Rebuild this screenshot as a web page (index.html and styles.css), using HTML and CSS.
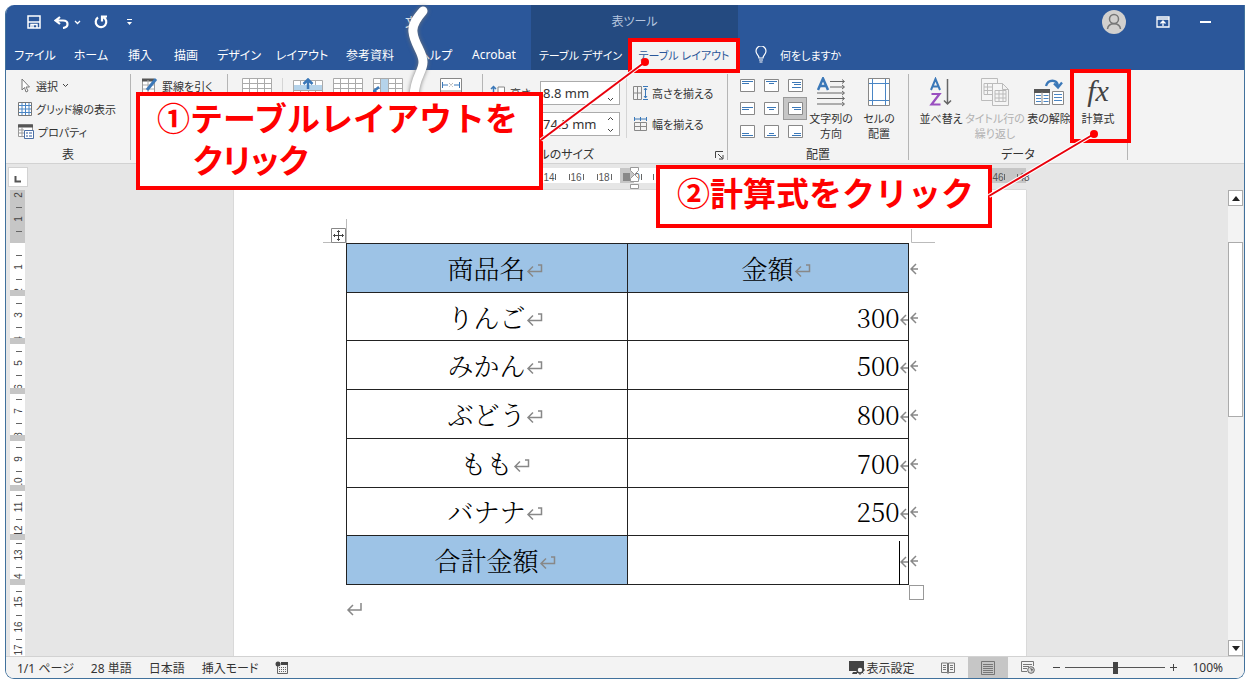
FILE: index.html
```html
<!DOCTYPE html>
<html lang="ja">
<head>
  <meta charset="UTF-8">
  <title>表ツール - 計算式</title>
  <link rel="stylesheet" href="styles.css">
</head>
<body>
  <svg class="defs" aria-hidden="true">
    <symbol id="ret" viewBox="0 0 17 14"><path d="M12 1h3.500v6.500H2M7 2.500L2 7.500l5 5"/></symbol>
    <symbol id="ret2" viewBox="0 0 17 14"><path d="M15 1v7H2M7 3L2 8l5 5"/></symbol>
    <symbol id="mark" viewBox="0 0 8 12"><path d="M8 6H1M6 1L1 6l5 5"/></symbol>
    <symbol id="grid" viewBox="0 0 30 21"><path class="w" d="M.5.500h29v20H.500z"/><path class="g" d="M.5.500h29v20H.500zM.5 5.500h29M.5 10.500h29M.5 15.500h29M7.500.500v20M15.500.500v20M22.500.500v20"/></symbol>
  </svg>

  <div class="window">
    <header class="titlebar">
      <div class="title-left">
        <div class="quick">
          <button aria-label="保存"><svg width="14" height="14" viewBox="0 0 14 14"><path d="M1 1h12v12H1zM1 7h12M4 13V9.500h6V13M6 10v3" fill="none" stroke="#fff" stroke-width="1.500"/></svg></button>
          <button aria-label="元に戻す"><svg width="15" height="13" viewBox="0 0 15 13"><path d="M6 1L1.500 4.500 6 8M2 4.500h7c6 0 6 7 0 7.500" fill="none" stroke="#fff" stroke-width="2.200"/></svg></button>
          <button class="small" aria-label="元に戻す一覧"><svg width="7" height="5"><path d="M1 1l2.500 2.500L6 1" fill="none" stroke="#fff" stroke-width="1.300"/></svg></button>
          <button aria-label="やり直し"><svg width="14" height="14" viewBox="0 0 14 14"><path d="M4 2.500a5.300 5.300 0 1 0 5.500-.3M8 6.500V1.500h5" fill="none" stroke="#fff" stroke-width="2.200"/></svg></button>
          <button class="custom" aria-label="カスタマイズ"><svg width="5" height="6"><path d="M0 .500h5" stroke="#fff"/><path d="M0 3h5L2.500 6z" fill="#fff"/></svg></button>
          <span class="docname">文</span>
        </div>
        <nav class="tabs">
          <button>ファイル</button>
          <button>ホーム</button>
          <button>挿入</button>
          <button>描画</button>
          <button>デザイン</button>
          <button>レイアウト</button>
          <button>参考資料</button>
          <button>ヘルプ</button>
          <button>Acrobat</button>
        </nav>
      </div>
      <div class="context">
        <div class="context-title">表ツール</div>
        <nav class="context-tabs">
          <button>テーブル デザイン</button>
          <button class="active">テーブル レイアウト</button>
        </nav>
      </div>
      <div class="title-right">
        <div class="account">
          <svg width="24" height="24" viewBox="0 0 24 24"><circle cx="12" cy="12" r="12" fill="#d2d0ce"/><g fill="none" stroke="#777" stroke-width="1.500"><circle cx="12" cy="9" r="4.500"/><path d="M5.500 19c1-7 12-7 13 0"/></g></svg>
          <button aria-label="リボンの表示オプション"><svg width="14" height="12" viewBox="0 0 14 12"><path d="M1 1h12v10H1zM1 3h12M7 10V5M4.500 7.500L7 5l2.500 2.500" fill="none" stroke="#fff" stroke-width="1.300"/></svg></button>
          <button aria-label="最小化"><svg width="11" height="2"><path d="M0 1h11" stroke="#fff" stroke-width="2"/></svg></button>
        </div>
        <button class="tellme"><svg width="12" height="17" viewBox="0 0 12 17"><path d="M4 12c0-3-3-3.500-3-7a5 5 0 0 1 10 0c0 3.500-3 4-3 7zM4 14h4M4.500 16h3" fill="none" stroke="#fff" stroke-width="1.200"/></svg>何をしますか</button>
      </div>
    </header>

    <div class="ribbon">
      <section class="group g-table">
        <div class="body col">
          <button><svg width="14" height="15" viewBox="0 0 14 15"><path d="M4 1v11l2.500-2.500L8 14l2-1-2-4h3.500z" fill="#fff" stroke="#777"/></svg>選択<svg width="7" height="5"><path d="M1 1l2.500 2.500L6 1" fill="none" stroke="#444"/></svg></button>
          <button><svg width="14" height="14" viewBox="0 0 14 14"><path d="M.5.500h13v13H.500z" fill="#fff" stroke="#777"/><path d="M1 3.500h12M1 7h12M1 10.500h12M4 1v12M7.500 1v12M11 1v12" stroke="#4a86c5"/></svg>グリッド線の表示</button>
          <button><svg width="16" height="15" viewBox="0 0 16 15"><path d="M.5.500h14v12H.500z" fill="#fff" stroke="#999"/><path d="M0 2h15" stroke="#555" stroke-width="3"/><path d="M0 6h6M0 9h6M4 3v10" stroke="#999"/><path d="M6.500 6.500h9v8h-9z" fill="#fff" stroke="#4a6fa5"/><path d="M8 9h2M11 9h3M8 12h2M11 12h3" stroke="#2b579a"/></svg>プロパティ</button>
        </div>
        <div class="label">表</div>
      </section>
      <section class="group g-draw">
        <div class="body col">
          <button><svg width="16" height="15" viewBox="0 0 16 15"><path d="M.5 1.500h12v13H.500z" fill="#fff" stroke="#999"/><path d="M0 2h12" stroke="#555" stroke-width="3"/><path d="M1 7h11M1 11h11M6 2v12" stroke="#aaa"/><path d="M5 12L14 1" stroke="#3b78b8" stroke-width="3"/></svg>罫線を引く</button>
        </div>
      </section>
      <section class="group g-rows">
        <div class="body">
          <button aria-label="削除"><svg width="30" height="21"><use href="#grid"/></svg></button>
          <i class="line"></i>
          <button aria-label="上に行を挿入"><svg width="30" height="23" viewBox="0 -2 30 23"><use href="#grid" width="30" height="21"/><path d="M1 5h28v5H1z" fill="#b5d3ea"/><path d="M15 9V0M10.500 4L15-.500 19.500 4" fill="none" stroke="#3b78b8" stroke-width="2.500"/></svg></button>
          <button aria-label="下に行を挿入"><svg width="30" height="21"><use href="#grid"/></svg></button>
          <button aria-label="左に列を挿入"><svg width="30" height="21"><use href="#grid"/><path d="M8 1h7v19H8z" fill="#b5d3ea"/><path d="M6 9L1 13l5 4" fill="none" stroke="#3b78b8" stroke-width="2.500"/></svg></button>
          <button class="fit" aria-label="自動調整"><svg width="22" height="24" viewBox="0 0 22 24"><path d="M.5.500h21v23H.500z" fill="#fff" stroke="#888"/><path d="M1 13h20" stroke="#999"/><path d="M2.500 4v6M19.500 4v6M3 7h5M19 7h-5" stroke="#3b78b8"/><path d="M9 5l4 4M13 5L9 9" stroke="#999" stroke-dasharray="1 1"/></svg></button>
        </div>
      </section>
      <section class="group g-size">
        <div class="body">
          <div class="fields">
            <label for="h"><svg width="16" height="16" viewBox="0 0 16 16"><path d="M3.500 2v13M1 4l2.500-2.500L6 4" fill="none" stroke="#3b78b8" stroke-width="1.500"/><path d="M8 2h6.500v13H8z" fill="#fff" stroke="#888"/></svg>高さ:</label>
            <div class="spin"><input id="h" value="8.8 mm"><svg width="7" height="15" viewBox="0 0 7 15"><path d="M1 12l2.500 2.500L6 12" fill="none" stroke="#444"/></svg></div>
            <div class="spin second"><input aria-label="幅" value="74.5 mm"><svg width="7" height="15" viewBox="0 0 7 15"><path d="M1 3L3.500.500 6 3M1 12l2.500 2.500L6 12" fill="none" stroke="#444"/></svg></div>
          </div>
          <div class="even">
            <button><svg width="15" height="14" viewBox="0 0 15 14"><path d="M.5.500h8v13h-8zM.5 7h8M4.500 1v12" fill="none" stroke="#888"/><path d="M10 .500h5M10 13.500h5M12.500 2v10M11 4l1.500-2L14 4M11 10l1.500 2 1.500-2" fill="none" stroke="#3b78b8"/></svg>高さを揃える</button>
            <button><svg width="15" height="14" viewBox="0 0 15 14"><path d="M1.500 5.500h12v8h-12zM1.500 9.500h12M7.500 5v8" fill="none" stroke="#888"/><path d="M1.500 0v4M7.500 0v4M13.500 0v4M2 2h11" fill="none" stroke="#3b78b8"/></svg>幅を揃える</button>
          </div>
        </div>
        <div class="label size-label">セルのサイズ<button class="launch" aria-label="表のプロパティ"><svg width="9" height="9" viewBox="0 0 9 9"><path d="M.5 7V.500H8M3 3l4.500 4.500M8 4v4H4" fill="none" stroke="#444"/></svg></button></div>
      </section>
      <section class="group g-align">
        <div class="body">
          <div class="aligns">
            <button aria-label="上揃え(左)"><svg width="15" height="13"><path class="b" d="M.5.500h14v12H.500z"/><path class="l" d="M2 2.500h11M2 4.500h7"/></svg></button>
            <button aria-label="上揃え(中央)"><svg width="15" height="13"><path class="b" d="M.5.500h14v12H.500z"/><path class="l" d="M2 2.500h11M5 4.500h5"/></svg></button>
            <button aria-label="上揃え(右)"><svg width="15" height="13"><path class="b" d="M.5.500h14v12H.500z"/><path class="l" d="M4 3.500h9M6 5.500h7M4 8.500h9"/></svg></button>
            <button aria-label="両端揃え(中央)"><svg width="15" height="13"><path class="b" d="M.5.500h14v12H.500z"/><path class="l" d="M2 5.500h11M2 7.500h7"/></svg></button>
            <button aria-label="中央揃え"><svg width="15" height="13"><path class="b" d="M.5.500h14v12H.500z"/><path class="l" d="M3 5.500h9M5 7.500h5"/></svg></button>
            <button class="on" aria-label="中央揃え(右)"><svg width="15" height="13"><path class="b" d="M.5.500h14v12H.500z"/><path class="l" d="M4 5.500h9M6 7.500h7"/></svg></button>
            <button aria-label="下揃え(左)"><svg width="15" height="13"><path class="b" d="M.5.500h14v12H.500z"/><path class="l" d="M2 8.500h7M2 10.500h11"/></svg></button>
            <button aria-label="下揃え(中央)"><svg width="15" height="13"><path class="b" d="M.5.500h14v12H.500z"/><path class="l" d="M5 8.500h5M3 10.500h9"/></svg></button>
            <button aria-label="下揃え(右)"><svg width="15" height="13"><path class="b" d="M.5.500h14v12H.500z"/><path class="l" d="M6 8.500h7M4 10.500h9"/></svg></button>
          </div>
          <button class="big"><svg width="30" height="30" viewBox="0 0 30 30"><path d="M2 13L7 1.500 12 13M4 9h6" fill="none" stroke="#3b78b8" stroke-width="2.500"/><path d="M14 4.500h14M14 10h14M1 16h27M1 21.500h27M1 27h27M26 2.500l2.500 2-2.500 2M26 8l2.500 2-2.500 2M26 14l2.500 2-2.500 2M26 19.500l2.500 2-2.500 2M26 25l2.500 2-2.500 2" fill="none" stroke="#666"/></svg>文字列の<br>方向</button>
          <button class="big"><svg width="22" height="30" viewBox="0 0 22 30"><path d="M.5 1.500h21v27H.500z" fill="#fff" stroke="#888"/><path d="M4.500 2v26M17.500 2v26M1 6.500h20M1 23.500h20" stroke="#4a86c5"/></svg>セルの<br>配置</button>
        </div>
        <div class="label">配置</div>
      </section>
      <section class="group g-data">
        <div class="body">
          <button class="big"><svg width="24" height="30" viewBox="0 0 24 30"><path d="M2 13L6.500 2 11 13M3.500 9.500h6" fill="none" stroke="#3b78b8" stroke-width="2"/><path d="M2.500 17h8L2.500 27.500h9" fill="none" stroke="#9a4fc0" stroke-width="2.200"/><path d="M18.500 2v25M15 23.500l3.500 3.500 3.500-3.500" fill="none" stroke="#666" stroke-width="1.500"/></svg>並べ替え</button>
          <button class="big wide" disabled><svg width="30" height="30" viewBox="0 0 30 30"><path d="M1.500 1.500h16v22h-16z" fill="#f5f5f5" stroke="#bbb"/><path d="M4 6.500h10v11H4zM4 10h10M4 13.500h10M7.500 6v11" fill="none" stroke="#bbb"/><path d="M12.500 6.500h10l6 6v16h-16zM22.500 6.500v6h6" fill="#f5f5f5" stroke="#bbb"/><path d="M15 13.500h11v11H15zM15 17h11M15 21h11M19 13v11M23 13v11" fill="none" stroke="#bbb"/></svg>タイトル行の<br>繰り返し</button>
          <button class="big"><svg width="30" height="30" viewBox="0 0 30 30"><path d="M12 9c2-7 11-7 12 0M20 6.500l4 4 4-5" fill="none" stroke="#3b78b8" stroke-width="2.300"/><path d="M.5 12.500h15v15H.500zM18.500 14.500h11v13h-11z" fill="#fff" stroke="#888"/><path d="M0 14h16" stroke="#555" stroke-width="4"/><path d="M8 15v12" stroke="#888"/><path d="M2 18.500h5M2 21.500h5M2 24.500h5M9.500 18.500h5M9.500 21.500h5M9.500 24.500h5M20 17.500h8M20 20.500h8M20 23.500h8" stroke="#4a86c5"/></svg>表の解除</button>
          <button class="big"><span class="fx">fx</span>計算式</button>
        </div>
        <div class="label">データ</div>
      </section>
    </div>

    <main class="work">
      <div class="hruler">
        <button class="tabstop" aria-label="左揃えタブ"><svg width="7" height="7"><path d="M1.500 0v5.500H7" fill="none" stroke="#555" stroke-width="2"/></svg></button>
        <svg class="hscale" width="800" height="26" viewBox="234 164 800 26">
          <path d="M234 168h112v15H234zM910 168h116v15H910zM620 168h14v15h-14z" fill="#c6c6c6"/>
          <path d="M346 168h274v15H346zM634 168h276v15H634z" fill="#fff"/>
          <path d="M555.500 174v6M569.500 174v6M583.500 174v6M597.500 174v6M611.500 174v6M641.500 174v6M653.500 174v6M1004.500 174v6M1017.500 174v6" stroke="#666"/>
          <g font-size="10" fill="#555" text-anchor="middle"><text x="549" y="181">14</text><text x="576" y="181">16</text><text x="604" y="181">18</text><text x="637" y="181">0</text><text x="998" y="181">46</text><text x="1024" y="181">48</text></g>
          <path d="M623 173h7v8h-7z" fill="#888"/>
          <path d="M630.500 167.500h8v3l-4 4-4-4zM630.500 181.500v-3l4-4 4 4v3zM630.500 184.500h8v4h-8z" fill="#fff" stroke="#999"/>
        </svg>
      </div>
      <div class="canvas">
        <svg class="vruler" width="15" height="466" viewBox="10 190 15 466">
          <path d="M10 190h15v466H10z" fill="#fff"/><path d="M10 190h15v53H10z" fill="#c6c6c6"/>
          <path d="M16 207.500h6M16 231.500h6M16 255.500h6M16 279.500h6M16 303.500h6M16 327.500h6M16 351.500h6M16 375.500h6M16 399.500h6M16 423.500h6M16 447.500h6M16 471.500h6M16 495.500h6M16 519.500h6M16 543.500h6M16 567.500h6M16 591.500h6M16 615.500h6M16 639.500h6" stroke="#666"/>
          <g font-size="10" fill="#444" text-anchor="middle">
            <text transform="translate(22 195) rotate(-90)">2</text>
            <text transform="translate(22 219) rotate(-90)">1</text>
            <text transform="translate(22 267) rotate(-90)">1</text>
            <text transform="translate(22 291) rotate(-90)">2</text>
            <text transform="translate(22 315) rotate(-90)">3</text>
            <text transform="translate(22 339) rotate(-90)">4</text>
            <text transform="translate(22 363) rotate(-90)">5</text>
            <text transform="translate(22 387) rotate(-90)">6</text>
            <text transform="translate(22 411) rotate(-90)">7</text>
            <text transform="translate(22 435) rotate(-90)">8</text>
            <text transform="translate(22 459) rotate(-90)">9</text>
            <text transform="translate(22 483) rotate(-90)">10</text>
            <text transform="translate(22 507) rotate(-90)">11</text>
            <text transform="translate(22 531) rotate(-90)">12</text>
            <text transform="translate(22 555) rotate(-90)">13</text>
            <text transform="translate(22 579) rotate(-90)">14</text>
            <text transform="translate(22 602) rotate(-90)">15</text>
            <text transform="translate(22 627) rotate(-90)">16</text>
            <text transform="translate(22 650) rotate(-90)">17</text>
          </g>
          <path d="M10 290h15v6H10zM10 338h15v6H10zM10 388h15v6H10zM10 435h15v6H10zM10 485h15v6H10zM10 534h15v6H10zM10 579h15v6H10z" fill="#c6c6c6"/>
        </svg>
        <div class="page">
          <div class="sheet">
            <svg class="corner left" width="24" height="24"><path d="M23.500 0v24M0 23.500h24" stroke="#bbb"/><path d="M8.500 9.500h14v14h-14z" fill="#fff" stroke="#888"/><path d="M15.500 11.500v10M10.500 16.500h10M14 13l1.500-1.500L17 13M14 20l1.500 1.500L17 20M12 15l-1.500 1.500L12 18M19 15l1.500 1.500L19 18" fill="none" stroke="#444"/></svg>
            <svg class="corner right" width="24" height="14"><path d="M.5 0v13.500H24" fill="none" stroke="#bbb"/></svg>
            <table class="items">
              <tr><th>商品名<svg class="ret"><use href="#ret"/></svg></th><th>金額<svg class="ret"><use href="#ret"/></svg><svg class="end"><use href="#mark"/></svg></th></tr>
              <tr><td>りんご<svg class="ret"><use href="#ret"/></svg></td><td class="num">300<svg class="mark"><use href="#mark"/></svg><svg class="end"><use href="#mark"/></svg></td></tr>
              <tr><td>みかん<svg class="ret"><use href="#ret"/></svg></td><td class="num">500<svg class="mark"><use href="#mark"/></svg><svg class="end"><use href="#mark"/></svg></td></tr>
              <tr><td>ぶどう<svg class="ret"><use href="#ret"/></svg></td><td class="num">800<svg class="mark"><use href="#mark"/></svg><svg class="end"><use href="#mark"/></svg></td></tr>
              <tr><td>もも<svg class="ret"><use href="#ret"/></svg></td><td class="num">700<svg class="mark"><use href="#mark"/></svg><svg class="end"><use href="#mark"/></svg></td></tr>
              <tr><td>バナナ<svg class="ret"><use href="#ret"/></svg></td><td class="num">250<svg class="mark"><use href="#mark"/></svg><svg class="end"><use href="#mark"/></svg></td></tr>
              <tr><th>合計金額<svg class="ret"><use href="#ret"/></svg></th><td class="num"><i class="caret"></i><svg class="mark"><use href="#mark"/></svg><svg class="end"><use href="#mark"/></svg></td></tr>
            </table>
            <i class="resize"></i>
          </div>
          <svg class="ret after"><use href="#ret2"/></svg>
        </div>
        <div class="scroll">
          <button aria-label="上へ"><svg width="8" height="5"><path d="M0 5h8L4 0z" fill="#222"/></svg></button>
          <div class="track"><div class="thumb"></div></div>
          <button aria-label="下へ"><svg width="8" height="5"><path d="M0 0h8L4 5z" fill="#222"/></svg></button>
        </div>
      </div>
    </main>

    <footer class="status">
      <span>1/1 ページ</span>
      <span>28 単語</span>
      <span>日本語</span>
      <span>挿入モード</span>
      <svg width="13" height="13" viewBox="0 0 13 13"><path d="M2.500 4v8.500h10V2" fill="none" stroke="#666"/><path d="M6 2.500h7" stroke="#444" stroke-width="3"/><circle cx="3" cy="3" r="2.500" fill="#444"/><path d="M4 6.500h7M4 8.500h7M4 10.500h7" stroke="#666" stroke-dasharray="1 1"/></svg>
      <div class="views">
        <button class="display"><svg width="16" height="14" viewBox="0 0 16 14"><path d="M0 0h15v10H0zM4 11h4v2H3z" fill="#444"/><circle cx="11" cy="9" r="3" fill="#f3f3f3" stroke="#444" stroke-width="1.500"/><path d="M11 4v2M11 12v2M6 9h2M14 9h2M7.500 5.500L9 7M14.500 5.500L13 7M7.500 12.500L9 11M14.500 12.500L13 11" stroke="#444"/></svg>表示設定</button>
        <button class="view" aria-label="閲覧モード"><svg width="14" height="12" viewBox="0 0 14 12"><path d="M.5 1h6v9.500h-6zM7.500 1h6v9.500h-6zM7 1v11M2 3.500h3M2 5.500h3M2 7.500h3M9 3.500h3M9 5.500h3M9 7.500h3" fill="none" stroke="#777"/></svg></button>
        <button class="view on" aria-label="印刷レイアウト"><svg width="14" height="14" viewBox="0 0 14 14"><path d="M.5.500h13v13H.500zM2 3.500h10M2 5.500h10M2 7.500h10M2 9.500h10M2 11.500h10" fill="none" stroke="#777"/></svg></button>
        <button class="view" aria-label="Web レイアウト"><svg width="14" height="13" viewBox="0 0 14 13"><path d="M12.500 5V.500H.500v10H6M2 3.500h9M2 5.500h6M2 7.500h4" fill="none" stroke="#777"/><circle cx="10" cy="9" r="3.300" fill="#ddd" stroke="#666"/><path d="M9 7l3 1-1 3z" fill="#666"/></svg></button>
        <div class="zoom">
          <button aria-label="縮小"><svg width="9" height="9"><path d="M1 4.500h7" stroke="#444"/></svg></button>
          <input type="range" min="0" max="100" value="50" aria-label="ズーム">
          <button aria-label="拡大"><svg width="9" height="9"><path d="M1 4.500h7M4.500 1v7" stroke="#444"/></svg></button>
          <span>100%</span>
        </div>
      </div>
    </footer>
  </div>

  <!-- 説明用の吹き出し -->
  <svg class="tear" width="40" height="94" viewBox="400 4 40 94"><path d="M423 11C416 19 412 25 413 32C414 44 423 52 423 62C423 72 415 76 414 96" fill="none" stroke="#fff" stroke-width="9" stroke-linecap="round"/></svg>
  <div class="frame frame-tab"></div>
  <div class="frame frame-fx"></div>
  <div class="callout one"><p>①テーブルレイアウトを</p><p class="second">クリック</p></div>
  <div class="callout two"><p>②計算式をクリック</p></div>
  <svg class="leads" width="580" height="150" viewBox="530 50 580 150">
    <g stroke="#fff" stroke-width="4"><path d="M645 62L541 140"/><path d="M1094 134L989 196"/></g>
    <g stroke="#e8000b" stroke-width="2"><path d="M645 62L541 140"/><path d="M1094 134L989 196"/></g>
    <g fill="#f00"><circle cx="645" cy="62" r="4"/><circle cx="1094" cy="134" r="4"/></g>
  </svg>
</body>
</html>
```
FILE: styles.css
```css
* {
  box-sizing: border-box;
  margin: 0;
  padding: 0;
}
body {
  height: 100vh;
  padding: 5px 7px 7px 5px;
  background: #fff;
  color: #333;
  font-family: "Noto Sans", "Noto Sans CJK JP", sans-serif;
  font-size: 12px;
  font-feature-settings: "palt";
  position: relative;
  overflow: hidden;
}
button, input {
  border: 0;
  background: none;
  color: inherit;
  font: inherit;
  font-feature-settings: inherit;
}
button {
  display: flex;
  align-items: center;
  white-space: nowrap;
}
svg {
  display: block;
  flex: none;
}
.defs {
  position: absolute;
  width: 0;
  height: 0;
}
.w { fill: #fff; }
.g { fill: none; stroke: #aaa; }

.window {
  height: 100%;
  display: flex;
  flex-direction: column;
  border: 1px solid #41719c;
  border-top: 0;
  border-radius: 9px 0 9px 9px;
  overflow: hidden;
}

/* タイトルバー */
.titlebar {
  display: flex;
  height: 65px;
  flex: none;
  background: #2b579a;
  color: #fff;
}
.title-left {
  width: 525px;
  display: flex;
  flex-direction: column;
}
.quick {
  height: 34px;
  display: flex;
  align-items: center;
  padding-left: 21px;
  gap: 13px;
}
.quick .small {
  margin-left: -8px;
}
.quick .custom {
  margin-left: 6px;
}
.docname {
  margin-left: auto;
  padding-right: 114px;
}
.tabs {
  display: grid;
  flex: 1;
  grid-template-columns: 58px 54px 44px 48px 58px 68px 68px 62px 56px;
}
.tabs button, .context-tabs button {
  justify-content: center;
}
.context {
  width: 207px;
  display: flex;
  flex-direction: column;
  background: #244a80;
}
.context-title {
  height: 34px;
  line-height: 34px;
  text-align: center;
  color: #b6c6df;
}
.context-tabs {
  flex: 1;
  display: grid;
  grid-template-columns: 1fr 108px;
  font-size: 11px;
}
.context-tabs .active {
  background: #f3f3f3;
  color: #2b579a;
}
.title-right {
  flex: 1;
  display: flex;
  flex-direction: column;
}
.account {
  height: 34px;
  display: flex;
  align-items: center;
  justify-content: flex-end;
  gap: 30px;
  padding-right: 33px;
}
.tellme {
  flex: 1;
  gap: 13px;
  padding-left: 17px;
  font-size: 11px;
}

/* リボン */
.ribbon {
  display: flex;
  flex: none;
  height: 94px;
  padding-top: 4px;
  background: #f3f3f3;
  border-bottom: 1px solid #d2d2d2;
}
.group {
  flex: none;
  display: flex;
  flex-direction: column;
  height: 86px;
  border-right: 1px solid #b5b5b5;
}
.body {
  display: flex;
  flex: 1;
  font-size: 11px;
}
.body.col {
  flex-direction: column;
}
.body.col button {
  height: 23px;
  gap: 4px;
}
.label {
  height: 10px;
  line-height: 10px;
  text-align: center;
}
.g-table {
  width: 125px;
}
.g-table .body {
  padding-left: 12px;
}
.g-draw {
  width: 97px;
}
.g-draw .body {
  padding-left: 11px;
}
.g-rows {
  width: 255px;
}
.g-rows .body {
  align-items: flex-start;
  padding: 4px 0 0 14px;
  gap: 10px;
}
.line {
  width: 1px;
  height: 60px;
  background: #d5d5d5;
}
.g-rows .fit {
  margin-left: 27px;
}
.g-size {
  width: 245px;
}
.g-size .body {
  gap: 6px;
}
.fields {
  display: grid;
  grid-template-columns: 50px 80px;
  grid-auto-rows: 24px;
  gap: 7px 0;
  padding: 7px 0 0 7px;
}
.fields label {
  display: flex;
  align-items: center;
  gap: 4px;
}
.spin {
  display: flex;
  align-items: center;
  background: #fff;
  border: 1px solid #ababab;
  padding-right: 5px;
}
.spin.second {
  grid-column: 2;
}
.spin input {
  width: 100%;
  min-width: 0;
  padding-left: 2px;
  font-size: 13px;
}
.even {
  border-left: 1px solid #d5d5d5;
  padding: 7px 0 0 6px;
  height: 64px;
  display: grid;
  grid-auto-rows: 24px;
  gap: 7px;
}
.even button {
  gap: 4px;
}
.size-label {
  display: flex;
  justify-content: space-between;
  padding: 0 3px 0 44px;
}
.g-align {
  width: 181px;
}
.aligns {
  display: grid;
  grid-template-columns: repeat(3, 24px);
  grid-auto-rows: 23px;
  padding: 0 0 0 7px;
  height: 70px;
}
.aligns button {
  justify-content: center;
}
.aligns .on {
  background: #c6c6c6;
  border: 1px solid #999;
}
.aligns .b {
  fill: #fff;
  stroke: #888;
}
.aligns .l {
  stroke: #3b78b8;
}
.big {
  display: flex;
  flex-direction: column;
  justify-content: flex-start;
  width: 48px;
  padding-top: 3px;
  line-height: 15px;
  text-align: center;
}
.big.wide {
  width: 58px;
}
.big svg {
  margin-bottom: 4px;
}
.big[disabled] {
  color: #b1b1b1;
}
.g-data {
  width: 219px;
}
.g-data .body {
  gap: 1px;
  padding-left: 8px;
}
.fx {
  height: 30px;
  margin-bottom: 4px;
  font: italic 30px/28px "Liberation Serif", serif;
  color: #444;
}

/* 文書 */
.work {
  flex: 1;
  min-height: 0;
  display: flex;
  flex-direction: column;
  background: #e6e6e6;
}
.hruler {
  height: 26px;
  flex: none;
  display: flex;
  justify-content: center;
  position: relative;
}
.hscale {
  margin-left: 18px;
  font-family: "Liberation Sans", sans-serif;
}
.tabstop {
  position: absolute;
  left: 2px;
  top: 3px;
  width: 20px;
  height: 20px;
  padding: 4px 0 0 5px;
  background: #fff;
  border: 1px solid #d2d2d2;
}
.canvas {
  flex: 1;
  min-height: 0;
  display: flex;
  justify-content: space-between;
  padding: 0 1px 0 4px;
}
.vruler {
  font-family: "Liberation Sans", sans-serif;
}
.page {
  width: 792px;
  margin-left: 6px;
  padding: 53px 117px 0 112px;
  background: #fff;
  box-shadow: 0 0 1px #999;
}
.sheet {
  position: relative;
}
.corner {
  position: absolute;
}
.corner.left {
  left: -23px;
  bottom: 100%;
}
.corner.right {
  left: 100%;
  bottom: 100%;
  margin-left: 2px;
}
.items {
  width: 100%;
  height: 342px;
  table-layout: fixed;
  border-collapse: collapse;
  color: #000;
  font-family: "Noto Serif CJK JP", "Liberation Serif", "Noto Sans CJK JP", serif;
  font-size: 26px;
  line-height: 32px;
  font-feature-settings: normal;
}
.items tr {
  height: 48px;
}
.items th, .items td {
  position: relative;
  border: 1px solid #222;
  font-weight: 300;
  text-align: center;
}
.items th {
  background: #9dc3e6;
}
.items .num {
  text-align: right;
}
.ret, .mark, .end {
  fill: none;
  stroke: #888;
  stroke-width: 1.5px;
}
.ret {
  display: inline-block;
  width: 17px;
  height: 14px;
  margin-right: -17px;
  vertical-align: 1px;
}
.mark {
  display: inline-block;
  width: 8px;
  height: 12px;
  vertical-align: 2px;
}
.end {
  position: absolute;
  left: 100%;
  top: 50%;
  width: 8px;
  height: 12px;
  margin: -5px 0 0 2px;
}
.caret {
  display: inline-block;
  width: 1px;
  height: 44px;
  margin: -8px 0;
  background: #000;
  vertical-align: middle;
}
.resize {
  position: absolute;
  left: 100%;
  top: 100%;
  width: 15px;
  height: 15px;
  background: #fff;
  border: 1px solid #999;
}
.after {
  margin-top: 17px;
}
.scroll {
  width: 15px;
  display: flex;
  flex-direction: column;
  background: #f3f3f3;
}
.scroll button {
  height: 16px;
  justify-content: center;
  background: #fff;
  border: 1px solid #ababab;
}
.track {
  flex: 1;
  padding-top: 36px;
}
.thumb {
  height: 44%;
  background: #fff;
  border: 1px solid #ababab;
}

/* ステータスバー */
.status {
  flex: none;
  display: flex;
  align-items: center;
  height: 22px;
  padding-left: 11px;
  gap: 17px;
  background: #f3f3f3;
  border-top: 1px solid #d2d2d2;
}
.views {
  display: flex;
  align-items: center;
  height: 100%;
  margin-left: auto;
  padding-right: 21px;
}
.display {
  gap: 1px;
  margin-right: 14px;
}
.view {
  width: 40px;
  height: 100%;
  justify-content: center;
}
.view.on {
  background: #c6c6c6;
}
.zoom {
  display: flex;
  align-items: center;
  gap: 4px;
  margin-left: 4px;
}
.zoom span {
  margin-left: 10px;
}
.zoom input {
  appearance: none;
  width: 100px;
  height: 12px;
  background: linear-gradient(#555, #555) center / 100% 1px no-repeat;
}
.zoom input::-webkit-slider-thumb {
  appearance: none;
  width: 5px;
  height: 12px;
  background: #444;
}

/* 吹き出し */
.tear, .frame, .callout, .leads {
  position: absolute;
}
.tear {
  left: 400px;
  top: 4px;
  filter: drop-shadow(0 0 2px #777);
}
.frame, .callout {
  border: 4px solid #f00;
}
.frame-tab {
  left: 628px;
  top: 38px;
  width: 112px;
  height: 35px;
}
.frame-fx {
  left: 1070px;
  top: 69px;
  width: 61px;
  height: 74px;
}
.callout {
  background: #fff;
  color: #f00;
  font-family: "Noto Sans CJK JP", sans-serif;
  font-size: 33px;
  font-weight: 700;
  line-height: 42px;
  white-space: nowrap;
  font-feature-settings: normal;
}
.one {
  left: 136px;
  top: 92px;
  padding: 0 20px 6px 17px;
  width: 407px;
}
.one .second {
  padding-left: 36px;
  font-feature-settings: "palt";
}
.two {
  left: 656px;
  top: 165px;
  width: 336px;
  padding: 2px 17px 11px;
}
.leads {
  left: 530px;
  top: 50px;
  pointer-events: none;
}
```
